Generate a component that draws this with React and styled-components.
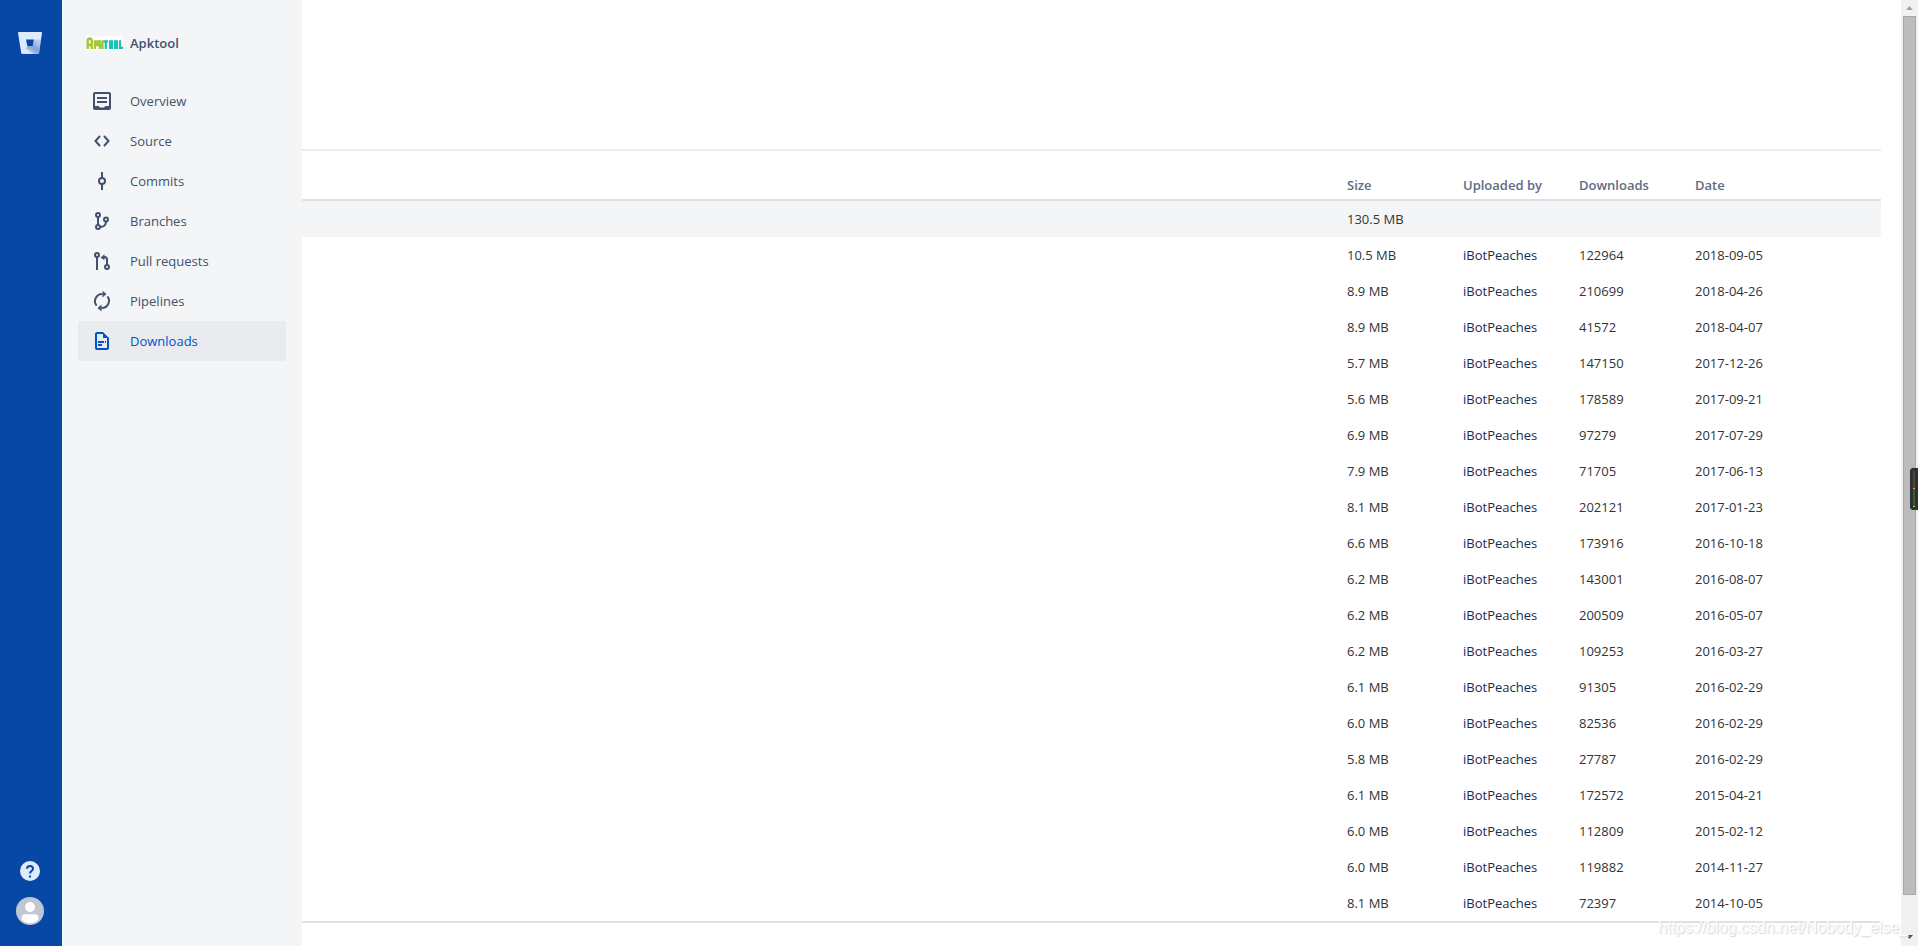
import React from 'react';
import styled, { createGlobalStyle } from 'styled-components';

const GlobalStyle = createGlobalStyle`
* {
    box-sizing: border-box;
}
body {
    margin: 0;
    background-color: #ffffff;
    color: #333333;
    font-family: "Open Sans", "Noto Sans", sans-serif;
    font-size: 13px;
    line-height: 20px;
}
`;
const Page = styled.div`
display: flex;
min-height: 100vh;
position: relative;
`;
const Rail = styled.nav`
flex: 0 0 62px;
display: flex;
flex-direction: column;
align-items: center;
justify-content: space-between;
padding: 27px 2px 21px 0;
background-color: #0747a6;
`;
const RailGroup = styled.div`
display: flex;
flex-direction: column;
align-items: center;
gap: 16px;
`;
const RailLink = styled.a`
display: block;
`;
const RailButton = styled.button`
display: block;
padding: 0;
border: 0;
background: none;
cursor: pointer;
`;
const Icon = styled.svg`
display: block;
flex: none;
`;
const Sidebar = styled.aside`
flex: 0 0 240px;
padding: 31px 16px;
background-color: #f4f5f7;
`;
const Project = styled.a`
display: flex;
align-items: center;
gap: 7px;
height: 24px;
margin-bottom: 26px;
padding-left: 8px;
color: #42526e;
font-weight: 600;
text-decoration: none;
`;
const NavItem = styled.a`
display: flex;
align-items: center;
gap: 16px;
height: 40px;
padding: 0 12px;
border-radius: 3px;
color: ${props => props.$active ? '#0052cc' : '#42526e'};
background-color: ${props => props.$active ? '#e9ebee' : 'transparent'};
text-decoration: none;
`;
const Main = styled.main`
flex: 1;
min-width: 0;
padding-right: 20px;
`;
const PageHead = styled.header`
height: 151px;
border-bottom: 2px solid #ebecf0;
`;
const Table = styled.table`
width: 100%;
margin-top: 18px;
border-collapse: separate;
border-spacing: 0;
table-layout: fixed;
border-bottom: 2px solid #dfe1e6;
`;
const HeadCell = styled.th`
width: ${props => props.$width || 'auto'};
height: 32px;
padding: 2px 0 0 11px;
border-bottom: 2px solid #dfe1e6;
color: #5e6c84;
font-weight: 600;
text-align: left;
`;
const Row = styled.tr`
background-color: ${props => props.$total ? '#f4f5f7' : '#ffffff'};
`;
const Cell = styled.td`
height: 36px;
padding: 0 0 0 11px;
white-space: nowrap;
`;
const UserLink = styled.a`
color: #172b4d;
text-decoration: none;
`;
const ScrollTrack = styled.div`
flex: 0 0 17px;
display: flex;
flex-direction: column;
align-items: center;
background-color: #f1f1f1;
`;
const ScrollArrow = styled.svg`
display: block;
flex: none;
`;
const ScrollThumb = styled.div`
flex: 1;
width: 13px;
margin-bottom: 34px;
border: 1px solid #a8a8a8;
background-color: #bcbcbc;
`;
const Meter = styled.svg`
position: absolute;
right: 0;
top: 468px;
`;
const Watermark = styled.div`
position: absolute;
right: 10px;
bottom: 8px;
color: #ffffff;
font-family: "Liberation Sans", Arial, sans-serif;
font-size: 16px;
text-shadow: 1px 1px 1px #d4d4d4, 0 0 1px #e4e4e4;
`;

const files = [
    ['10.5 MB', '122964', '2018-09-05'],
    ['8.9 MB', '210699', '2018-04-26'],
    ['8.9 MB', '41572', '2018-04-07'],
    ['5.7 MB', '147150', '2017-12-26'],
    ['5.6 MB', '178589', '2017-09-21'],
    ['6.9 MB', '97279', '2017-07-29'],
    ['7.9 MB', '71705', '2017-06-13'],
    ['8.1 MB', '202121', '2017-01-23'],
    ['6.6 MB', '173916', '2016-10-18'],
    ['6.2 MB', '143001', '2016-08-07'],
    ['6.2 MB', '200509', '2016-05-07'],
    ['6.2 MB', '109253', '2016-03-27'],
    ['6.1 MB', '91305', '2016-02-29'],
    ['6.0 MB', '82536', '2016-02-29'],
    ['5.8 MB', '27787', '2016-02-29'],
    ['6.1 MB', '172572', '2015-04-21'],
    ['6.0 MB', '112809', '2015-02-12'],
    ['6.0 MB', '119882', '2014-11-27'],
    ['8.1 MB', '72397', '2014-10-05'],
];

const icons = {
    Overview: (
        <>
            <rect x="4" y="4" width="16" height="16" rx="1" />
            <path d="M7 9h10M7 13h10" />
            <path d="M4 17h4.5l1.5 1.5h4l1.5-1.5H20v3H4z" fill="currentColor" stroke="none" />
        </>
    ),
    Source: <path d="M9.500 7.500L5.500 12l4 4.500M14.500 7.500l4 4.500-4 4.500" strokeLinecap="round" />,
    Commits: (
        <>
            <circle cx="12" cy="12" r="3" />
            <path d="M12 3v6M12 15v6" />
        </>
    ),
    Branches: (
        <>
            <circle cx="8" cy="6" r="2" />
            <circle cx="8" cy="18" r="2" />
            <circle cx="16" cy="10.5" r="2" />
            <path d="M8 8v8M16 12.5c0 3.8-2 5.5-6 5.5" />
        </>
    ),
    'Pull requests': (
        <>
            <circle cx="7" cy="6" r="2" />
            <circle cx="17" cy="18" r="2" />
            <path d="M7 8v13M17 16v-5.500c0-1.700-.8-2.500-2.500-2.500H13" />
            <path d="M14.500 5.200v6.100L10.500 8.500z" fill="currentColor" stroke="none" />
        </>
    ),
    Pipelines: (
        <>
            <path d="M6.600 16.700A7.200 7.200 0 0 1 12.500 5M17.400 7.300A7.200 7.200 0 0 1 11.500 19" />
            <path d="M12.500 1.800L16.500 5l-4 3.500zM11.500 15.500v7L7.500 19z" fill="currentColor" stroke="none" />
        </>
    ),
    Downloads: (
        <>
            <path d="M13 4H7a1 1 0 0 0-1 1v14a1 1 0 0 0 1 1h10a1 1 0 0 0 1-1V9" />
            <path d="M13 3l6 6h-6zM8 12h6v2H8zM15 12h1v2h-1zM8 15h4v2H8z" fill="currentColor" stroke="none" />
        </>
    ),
};

const App = () => {
  return (
    <>
        <GlobalStyle />
        <Page>
            <Rail aria-label="Global">
                <RailLink href="#" aria-label="Bitbucket">
                    <Icon width="32" height="32" viewBox="0 0 32 32">
                        <defs>
                            <linearGradient id="bucket" x1="1" y1="0.2" x2="0.4" y2="0.9">
                                <stop offset="0.1" stopColor="#0747a6" stopOpacity="0.2" />
                                <stop offset="0.5" stopColor="#0747a6" stopOpacity="0.4" />
                                <stop offset="1" stopColor="#deebff" />
                            </linearGradient>
                        </defs>
                        <path d="M4.800 5h22.400c.500 0 .9.4.8.9l-2.900 20c-.1.500-.5.800-1 .8H8.300c-.6 0-1-.4-1.100-.9L4 5.900c0-.5.300-.9.800-.9z" fill="#deebff" />
                        <path d="M26.900 12.500h-7l-1.200 6.500h-5.200l-5.900 7.400c.2.200.5.300.7.300h15.800c.5 0 .9-.3 1-.8z" fill="url(#bucket)" />
                        <path d="M12 12.500h7.900L18.700 19h-5.400z" fill="#0747a6" />
                    </Icon>
                </RailLink>
                <RailGroup>
                    <RailButton type="button" aria-label="Help">
                        <Icon width="20" height="20" viewBox="0 0 20 20">
                            <circle cx="10" cy="10" r="10" fill="#deebff" />
                            <path d="M7 7.800C7 5.900 8.200 5 10 5s3 1 3 2.700c0 2.300-3 2.400-3 4.800" fill="none" stroke="#0747a6" strokeWidth="2" />
                            <rect x="9" y="14.500" width="2" height="2" fill="#0747a6" />
                        </Icon>
                    </RailButton>
                    <RailButton type="button" aria-label="Account">
                        <Icon width="28" height="28" viewBox="0 0 28 28">
                            <circle cx="14" cy="14" r="14" fill="#c1c7d0" />
                            <circle cx="14" cy="10" r="5" fill="#ffffff" />
                            <path d="M9.500 17.200h9a4 4 0 0 1 4 4c0 1.500-.5 2.200-1.500 2.900a12.300 12.300 0 0 1-14 0c-1-.7-1.500-1.400-1.500-2.900a4 4 0 0 1 4-4z" fill="#ffffff" />
                        </Icon>
                    </RailButton>
                </RailGroup>
            </Rail>
            <Sidebar>
                <Project href="#">
                    <Icon width="37" height="14" viewBox="0 0 37 14">
                        <rect width="37" height="14" fill="#ffffff" />
                        <g fill="none" stroke="#a4c639" strokeWidth="2.4">
                            <path d="M1.700 13V4.500a2 2 0 0 1 4 0V13M1.500 9h4M1.500 3h4.500" />
                            <path d="M9 13V5.500h2.500v3.500H9M13.800 4.300v8.700M16.500 4.300v3.700l-2 1 2 1v3" />
                        </g>
                        <g fill="none" stroke="#1cbfb4" strokeWidth="2.200">
                            <path d="M17.500 5.400h4.500M19.800 5v8M24 5.400h2v6.500h-2zM29 5.400h2v6.500h-2zM34 4.300v7.600h3" />
                        </g>
                    </Icon>
                    Apktool
                </Project>
                {Object.keys(icons).map(name => (
                    <NavItem key={name} href="#" $active={name === 'Downloads'}>
                        <Icon width="24" height="24" viewBox="0 0 24 24" fill="none" stroke="currentColor" strokeWidth="2">
                            {icons[name]}
                        </Icon>
                        {name}
                    </NavItem>
                ))}
            </Sidebar>
            <Main>
                <PageHead />
                <Table>
                    <thead>
                        <tr>
                            <HeadCell />
                            <HeadCell $width="116px">Size</HeadCell>
                            <HeadCell $width="116px">Uploaded by</HeadCell>
                            <HeadCell $width="116px">Downloads</HeadCell>
                            <HeadCell $width="197px">Date</HeadCell>
                        </tr>
                    </thead>
                    <tbody>
                        <Row $total>
                            <Cell />
                            <Cell>130.5 MB</Cell>
                            <Cell colSpan="3" />
                        </Row>
                        {files.map(([size, downloads, date]) => (
                            <Row key={date + size}>
                                <Cell />
                                <Cell>{size}</Cell>
                                <Cell><UserLink href="#">iBotPeaches</UserLink></Cell>
                                <Cell>{downloads}</Cell>
                                <Cell><time dateTime={date}>{date}</time></Cell>
                            </Row>
                        ))}
                    </tbody>
                </Table>
            </Main>
            <ScrollTrack>
                <ScrollArrow width="17" height="16" viewBox="0 0 17 16">
                    <path d="M5 10l3.500-4L12 10z" fill="#a3a3a3" />
                </ScrollArrow>
                <ScrollThumb />
                <ScrollArrow width="17" height="17" viewBox="0 0 17 17">
                    <path d="M5 6h7l-3.500 4z" fill="#505050" />
                </ScrollArrow>
            </ScrollTrack>
            <Watermark>https://blog.csdn.net/Nobody_else_</Watermark>
            <Meter width="8" height="42" viewBox="0 0 8 42">
                <path d="M2 0h6v42H2l-2-2V2z" fill="#2c3136" />
                <rect x="3" y="3" width="2" height="17" fill="#5b4526" />
                <rect x="3" y="20" width="2" height="1" fill="#ffa019" />
                <rect x="3" y="21" width="2" height="17" fill="#3c5a2b" />
                <rect x="3" y="38" width="2" height="1" fill="#8cf02a" />
            </Meter>
        </Page>
    </>
  )
};

export default App;
